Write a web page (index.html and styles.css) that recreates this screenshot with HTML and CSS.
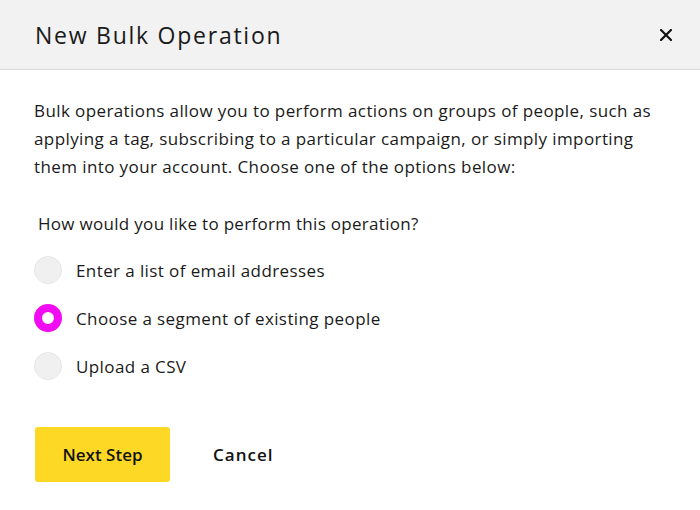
FILE: index.html
```html
<!DOCTYPE html>
<html>
<head>
<meta charset="utf-8">
<link rel="stylesheet" href="styles.css">
</head>
<body>
<div class="modal">
  <div class="modal-header">
    <h1 class="modal-title">New Bulk Operation</h1>
    <button class="close" aria-label="Close">
      <svg width="12" height="12" viewBox="0 0 12 12"><path d="M1 1L11 11M11 1L1 11" stroke="#111" stroke-width="2.2" stroke-linecap="square"/></svg>
    </button>
  </div>
  <div class="modal-body">
    <p class="intro">Bulk operations allow you to perform actions on groups of people, such as applying a tag, subscribing to a particular campaign, or simply importing them into your account. Choose one of the options below:</p>
    <p class="question">How would you like to perform this operation?</p>
    <div class="options">
      <label class="option"><span class="radio"></span><span class="label">Enter a list of email addresses</span></label>
      <label class="option"><span class="radio checked"></span><span class="label">Choose a segment of existing people</span></label>
      <label class="option"><span class="radio"></span><span class="label">Upload a CSV</span></label>
    </div>
    <div class="actions">
      <button class="btn-primary">Next Step</button>
      <button class="btn-link">Cancel</button>
    </div>
  </div>
</div>
</body>
</html>
```
FILE: styles.css
```css
* { box-sizing: border-box; }
html, body { margin: 0; padding: 0; background: #fff; }
body { font-family: "Open Sans", "Liberation Sans", sans-serif; color: #1a1a1a; }
.modal { width: 700px; height: 510px; background: #fff; }
.modal-header {
  height: 70px;
  background: #f2f2f2;
  border-bottom: 1px solid #d9d9d9;
  display: flex;
  align-items: center;
  justify-content: space-between;
  padding: 0 28px 0 35px;
}
.modal-title { margin: 0; font-size: 23px; font-weight: 400; letter-spacing: 1.75px; color: #1a1a1a; }
.close { background: none; border: 0; padding: 0; display: flex; cursor: pointer; }
.modal-body { padding: 27px 34px 0 34px; letter-spacing: 0.4px; }
.intro { margin: 0; font-size: 17px; line-height: 28px; }
.question { margin: 29px 0 0 4px; font-size: 17px; line-height: 28px; letter-spacing: 0.3px; }
.options { display: flex; flex-direction: column; gap: 20px; margin-top: 18px; }
.option { display: flex; align-items: center; gap: 14px; font-size: 17px; height: 28px; }
.radio { width: 28px; height: 28px; border-radius: 50%; background: #f0f0f0; border: 1px solid #e6e6e6; flex: none; }
.radio.checked { background: #fff; border: 8px solid #f20cf2; }
.actions { display: flex; align-items: center; gap: 43px; margin-top: 47px; padding-left: 1px; }
.btn-primary {
  width: 135px; height: 55px; background: #fdd824; border: 0; border-radius: 3px;
  font-family: inherit; font-size: 17px; font-weight: 600; color: #111; cursor: pointer; letter-spacing: 0;
}
.btn-link { background: none; border: 0; padding: 0; font-family: inherit; font-size: 17px; font-weight: 600; color: #111; letter-spacing: 1px; }
```
